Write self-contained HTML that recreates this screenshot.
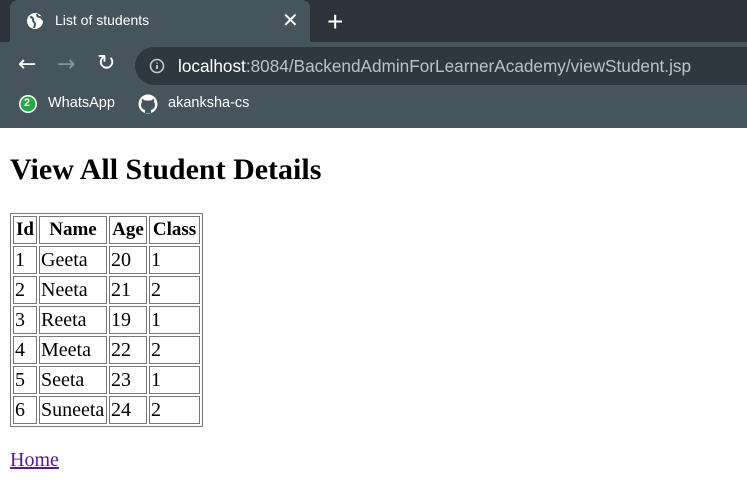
<!DOCTYPE html>
<html><head><meta charset="utf-8"><style>
*{margin:0;padding:0;box-sizing:border-box}
body{width:747px;height:501px;overflow:hidden;background:#fff;font-family:"Liberation Serif",serif;position:relative}
.tabs{position:absolute;left:0;top:0;width:747px;height:42px;background:#2b3439}
.tab{position:absolute;left:10px;top:0;width:300px;height:42px;background:#46545d;border-radius:8px 8px 0 0;color:#fff;font:14px "Liberation Sans",sans-serif}
.toolbar{position:absolute;left:0;top:42px;width:747px;height:86px;background:#46545d}
.addr{position:absolute;left:135px;top:5px;width:640px;height:38px;background:#2d383f;border-radius:19px;color:#fff;font:17.2px "Liberation Sans",sans-serif}
.bm{position:absolute;top:53px;color:#fff;font:14.5px "Liberation Sans",sans-serif}
h1{position:absolute;left:10px;top:152px;font-size:30px;font-weight:bold;white-space:nowrap;line-height:36px}
table{position:absolute;left:10px;top:213px;border:1px solid #777;border-spacing:2px;font-size:20px}
td,th{border:1px solid #777;height:28px;padding:0 1px;text-align:left;line-height:26px;white-space:nowrap}
th{text-align:center;font-size:19px}
a{position:absolute;left:10px;top:449px;font-size:20px;color:#551a8b;text-decoration:underline}
</style></head><body>
<div class="tabs">
 <div class="tab">
  <svg style="position:absolute;left:16px;top:12px" width="18" height="18" viewBox="0 0 18 18"><circle cx="9" cy="9" r="8" fill="#fff"/><path d="M4 5c2 0 3 1 3 3s2 2 2 4-1 3-1 4M11 2c0 2 1 3 3 3s2 2 3 3" stroke="#46545d" stroke-width="2" fill="none"/></svg>
  <span style="position:absolute;left:45px;top:12px">List of students</span>
  <span style="position:absolute;left:272px;top:8px;font-size:20px">✕</span>
 </div>
 <span style="position:absolute;left:327px;top:6px;color:#fff;font:28px 'Liberation Sans',sans-serif">+</span>
</div>
<div class="toolbar">
 <span style="position:absolute;left:18px;top:10px;color:#fff;font:22px 'DejaVu Sans',sans-serif">←</span>
 <span style="position:absolute;left:57px;top:10px;color:#8a969e;font:22px 'DejaVu Sans',sans-serif">→</span>
 <span style="position:absolute;left:97px;top:9px;color:#fff;font:22px 'DejaVu Sans',sans-serif">↻</span>
 <div class="addr">
  <svg style="position:absolute;left:14px;top:11px" width="16" height="16" viewBox="0 0 16 16"><circle cx="8" cy="8" r="6.5" stroke="#c5cbcf" stroke-width="1.6" fill="none"/><path d="M8 7v4M8 4.5v1" stroke="#c5cbcf" stroke-width="1.8"/></svg>
  <span style="position:absolute;left:43px;top:9px;white-space:nowrap">localhost<span style="color:#bcc3c8">:8084/BackendAdminForLearnerAcademy/viewStudent.jsp</span></span>
 </div>
 <div class="bm" style="left:18px"><svg width="20" height="20" viewBox="0 0 20 20" style="position:absolute;left:0;top:-1px"><circle cx="10" cy="10" r="9" fill="#fff"/><circle cx="10" cy="10" r="7.5" fill="#25a745"/></svg><span style="position:absolute;left:6px;top:2px;font-size:11px;font-weight:bold">2</span><span style="position:absolute;left:30px;top:0px;white-space:nowrap">WhatsApp</span></div>
 <div class="bm" style="left:138px"><svg width="20" height="20" viewBox="0 0 20 20" style="position:absolute;left:0;top:-1px"><circle cx="10" cy="10" r="9.5" fill="#fff"/><path d="M7 19v-3c-3-1-4-3-4-5s1-3 1-3-.5-2 0-3c1 0 2 1 3 1.5h6c1-.5 2-1.5 3-1.5.5 1 0 3 0 3s1 1 1 3-1 4-4 5v3z" fill="#46545d"/></svg><span style="position:absolute;left:30px;top:0px;white-space:nowrap">akanksha-cs</span></div>
</div>
<h1>View All Student Details</h1>
<table>
<tr><th style="width:24px">Id</th><th style="width:68px">Name</th><th style="width:38px">Age</th><th style="width:51px">Class</th></tr>
<tr><td>1</td><td>Geeta</td><td>20</td><td>1</td></tr>
<tr><td>2</td><td>Neeta</td><td>21</td><td>2</td></tr>
<tr><td>3</td><td>Reeta</td><td>19</td><td>1</td></tr>
<tr><td>4</td><td>Meeta</td><td>22</td><td>2</td></tr>
<tr><td>5</td><td>Seeta</td><td>23</td><td>1</td></tr>
<tr><td>6</td><td>Suneeta</td><td>24</td><td>2</td></tr>
</table>
<a>Home</a>
</body></html>
